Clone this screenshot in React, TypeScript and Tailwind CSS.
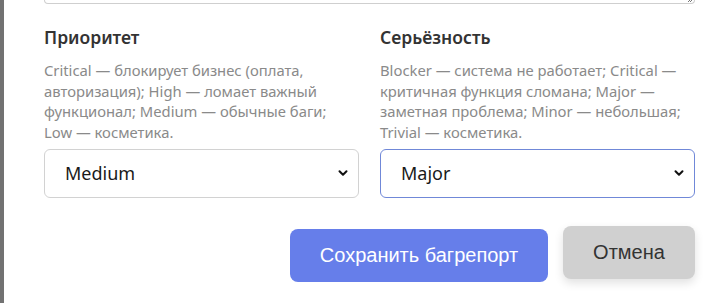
import { useState } from 'react';

const PRIORITIES = ['Critical', 'High', 'Medium', 'Low'];
const SEVERITIES = ['Blocker', 'Critical', 'Major', 'Minor', 'Trivial'];

function Chevron() {
  return (
    <svg
      className="pointer-events-none absolute right-[10px] top-1/2 -translate-y-1/2"
      width="12"
      height="12"
      viewBox="0 0 12 12"
      fill="none"
    >
      <path d="M2.5 4.2 6 7.8 9.5 4.2" stroke="#111" strokeWidth="2" strokeLinecap="round" strokeLinejoin="round" />
    </svg>
  );
}

interface FieldProps {
  label: string;
  hint: string;
  options: string[];
  value: string;
  onChange: (v: string) => void;
  focused?: boolean;
}

function Field({ label, hint, options, value, onChange, focused }: FieldProps) {
  return (
    <div className="flex flex-col">
      <h3 className="text-[17.5px] leading-[24px] font-semibold text-[#333]">{label}</h3>
      <p className="mt-[11px] pr-[10px] text-[14.8px] leading-[20.7px] text-[#8a8a8a]">{hint}</p>
      <div className="relative mt-[6px]">
        <select
          value={value}
          onChange={e => onChange(e.target.value)}
          className={`w-full h-[49px] appearance-none rounded-[6px] bg-white pl-[20px] text-[18px] text-[#1a1a1a] outline-none border ${
            focused ? 'border-[#7088d8]' : 'border-[#d2d2d2]'
          }`}
        >
          {options.map(o => (
            <option key={o} value={o}>
              {o}
            </option>
          ))}
        </select>
        <Chevron />
      </div>
    </div>
  );
}

export default function App() {
  const [priority, setPriority] = useState('Medium');
  const [severity, setSeverity] = useState('Major');

  return (
    <div className="flex w-[725px] h-[303px] overflow-hidden bg-white font-['Noto_Sans',sans-serif]">
      <div className="w-[4px] shrink-0 bg-[#727272]" />
      <div className="flex-1 pl-[40px] pr-[30px]">
        {/* end of the description textarea above */}
        <div className="relative h-[4px] rounded-b-[6px] border-x border-b border-[#cfcfcf]">
          <svg className="absolute right-[2px] bottom-[1px]" width="6" height="3" viewBox="0 0 6 3">
            <path d="M2 3 5 0M4 3 6 1" stroke="#777" strokeWidth="1" />
          </svg>
        </div>

        <div className="mt-[21px] grid grid-cols-2 gap-x-[21px]">
          <Field
            label="Приоритет"
            hint="Critical — блокирует бизнес (оплата, авторизация); High — ломает важный функционал; Medium — обычные баги; Low — косметика."
            options={PRIORITIES}
            value={priority}
            onChange={setPriority}
          />
          <Field
            label="Серьёзность"
            hint="Blocker — система не работает; Critical — критичная функция сломана; Major — заметная проблема; Minor — небольшая; Trivial — косметика."
            options={SEVERITIES}
            value={severity}
            onChange={setSeverity}
            focused
          />
        </div>

        <div className="mt-[31px] flex items-start justify-end gap-[15px] font-['Liberation_Sans',Arial,sans-serif]">
          <button className="h-[53px] w-[258px] rounded-[8px] bg-[#667eea] text-[20px] text-white">
            Сохранить багрепорт
          </button>
          <button className="-mt-[3px] h-[53px] w-[132px] rounded-[8px] bg-[#d0d0d0] text-[20px] text-[#333] shadow-[0_4px_10px_rgba(0,0,0,0.12)]">
            Отмена
          </button>
        </div>
      </div>
    </div>
  );
}
